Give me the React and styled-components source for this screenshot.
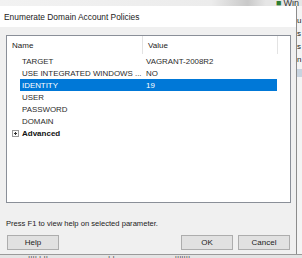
import React from "react";
import styled, { createGlobalStyle } from "styled-components";

const GlobalStyle = createGlobalStyle`
  *, *::before, *::after {
    box-sizing: border-box;
  }
  html, body {
    margin: 0;
    padding: 0;
    background: #cfcfcf;
  }
  body {
    font-family: "Liberation Sans", Arial, sans-serif;
  }
`;

const Desktop = styled.div`
  width: 302px;
  height: 258px;
  overflow: hidden;
  background: #d4d4d4;
  display: flex;
  flex-direction: column;
`;

const TopStrip = styled.div`
  height: 6px;
  flex: none;
  display: flex;
  background: linear-gradient(90deg, #f2f2f2 0%, #ececec 70%, #c9c9c9 82%, #e6e6e6 88%);
  overflow: hidden;
`;

const StripSpacer = styled.div`
  flex: 1;
`;

const TaskTitle = styled.div`
  width: 26px;
  display: flex;
  align-items: flex-end;
  gap: 2px;
  font-size: 9px;
  line-height: 6px;
  color: #333;
  overflow: hidden;
`;

const Middle = styled.div`
  flex: none;
  display: flex;
  height: 248px;
`;

const RightStrip = styled.div`
  flex: 1;
  background: #f4f4f4;
  display: flex;
  flex-direction: column;
  padding-top: 11px;
  gap: 5px;
  font-size: 8px;
  color: #222;
  overflow: hidden;
`;

const Frag = styled.div`
  height: 8px;
  line-height: 8px;
  background: ${(p) => p.$bg || "transparent"};
`;

const BottomStrip = styled.div`
  flex: 1;
  background: #e4e4e4;
  border-top: 1px solid #9a9a9a;
  display: flex;
  gap: 60px;
  padding-left: 28px;
  font-size: 8px;
  line-height: 6px;
  color: #555;
  overflow: hidden;
`;

const Dialog = styled.div`
  width: 297px;
  flex: none;
  background: #f0f0f0;
  border-right: 1px solid #8c8c8c;
  display: flex;
  flex-direction: column;
`;

const TitleBar = styled.div`
  height: 21px;
  background: #ffffff;
  display: flex;
  align-items: center;
  padding-left: 4px;
  font-size: 8.4px;
  color: #222;
`;

const Body = styled.div`
  flex: 1;
  display: flex;
  flex-direction: column;
  padding: 8px 5px 4px 6px;
`;

const ListBox = styled.div`
  height: 168px;
  background: #ffffff;
  border: 1px solid #8a8f98;
  display: flex;
  flex-direction: column;
`;

const Header = styled.div`
  width: 271px;
  height: 18px;
  display: flex;
  border-right: 1px solid #e3e3e3;
  font-size: 8px;
  color: #222;
`;

const HeadCell = styled.div`
  width: ${(p) => p.$w}px;
  padding-left: 5px;
  display: flex;
  align-items: center;
  border-right: ${(p) => (p.$sep ? "1px solid #e3e3e3" : "none")};
  flex: ${(p) => (p.$grow ? 1 : "none")};
`;

const Rows = styled.div`
  display: flex;
  flex-direction: column;
  padding-top: 1px;
`;

const Row = styled.div`
  width: 257px;
  height: 12px;
  margin-left: 13px;
  display: flex;
  align-items: center;
  font-size: 7.9px;
  color: ${(p) => (p.$selected ? "#ffffff" : "#2b2b2b")};
  background: ${(p) => (p.$selected ? "#0078d7" : "transparent")};
`;

const NameCell = styled.div`
  width: 126px;
  padding-left: 2px;
  white-space: nowrap;
  overflow: hidden;
`;

const ValueCell = styled.div`
  flex: 1;
  white-space: nowrap;
`;

const GroupRow = styled.div`
  height: 12px;
  display: flex;
  align-items: center;
  gap: 3px;
  padding-left: 5px;
  font-size: 8px;
  font-weight: bold;
  color: #111;
`;

const Expander = styled.div`
  width: 7px;
  height: 7px;
  border: 1px solid #9a9a9a;
  background: #fafafa;
  position: relative;
  &::before,
  &::after {
    content: "";
    position: absolute;
    background: #333;
  }
  &::before {
    left: 1px;
    top: 2px;
    width: 3px;
    height: 1px;
  }
  &::after {
    left: 2px;
    top: 1px;
    width: 1px;
    height: 3px;
  }
`;

const Hint = styled.div`
  margin-top: 16px;
  height: 10px;
  line-height: 10px;
  font-size: 7.6px;
  color: #222;
`;

const Buttons = styled.div`
  margin-top: 6px;
  display: flex;
  padding-left: 1px;
  gap: 5px;
`;

const Button = styled.div`
  width: 52px;
  height: 15px;
  border: 1px solid #adadad;
  background: #e1e1e1;
  display: flex;
  align-items: center;
  justify-content: center;
  font-size: 8px;
  color: #222;
  margin-left: ${(p) => p.$push || 0}px;
`;

const params = [
  { name: "TARGET", value: "VAGRANT-2008R2" },
  { name: "USE INTEGRATED WINDOWS ...", value: "NO" },
  { name: "IDENTITY", value: "19", selected: true },
  { name: "USER", value: "" },
  { name: "PASSWORD", value: "" },
  { name: "DOMAIN", value: "" },
];

export default function App() {
  return (
    <>
      <GlobalStyle />
      <Desktop>
        <TopStrip>
          <StripSpacer />
          <TaskTitle>
            <span style={{ color: "#2e7d32" }}>■</span>
            <span>Win</span>
          </TaskTitle>
        </TopStrip>
        <Middle>
          <Dialog>
            <TitleBar>Enumerate Domain Account Policies</TitleBar>
            <Body>
              <ListBox>
                <Header>
                  <HeadCell $w={136} $sep>
                    Name
                  </HeadCell>
                  <HeadCell $grow>Value</HeadCell>
                </Header>
                <Rows>
                  {params.map((p) => (
                    <Row key={p.name} $selected={p.selected}>
                      <NameCell>{p.name}</NameCell>
                      <ValueCell>{p.value}</ValueCell>
                    </Row>
                  ))}
                  <GroupRow>
                    <Expander />
                    Advanced
                  </GroupRow>
                </Rows>
              </ListBox>
              <Hint>Press F1 to view help on selected parameter.</Hint>
              <Buttons>
                <Button>Help</Button>
                <Button $push={117}>OK</Button>
                <Button>Cancel</Button>
              </Buttons>
            </Body>
          </Dialog>
          <RightStrip>
            <Frag>u</Frag>
            <Frag>s</Frag>
            <Frag>s</Frag>
            <Frag>n</Frag>
            <Frag $bg="#c8d4e0">&nbsp;</Frag>
          </RightStrip>
        </Middle>
        <BottomStrip>
          <span>ıııı ı ıı</span>
          <span>ı ı</span>
          <span>ııııııı</span>
        </BottomStrip>
      </Desktop>
    </>
  );
}
